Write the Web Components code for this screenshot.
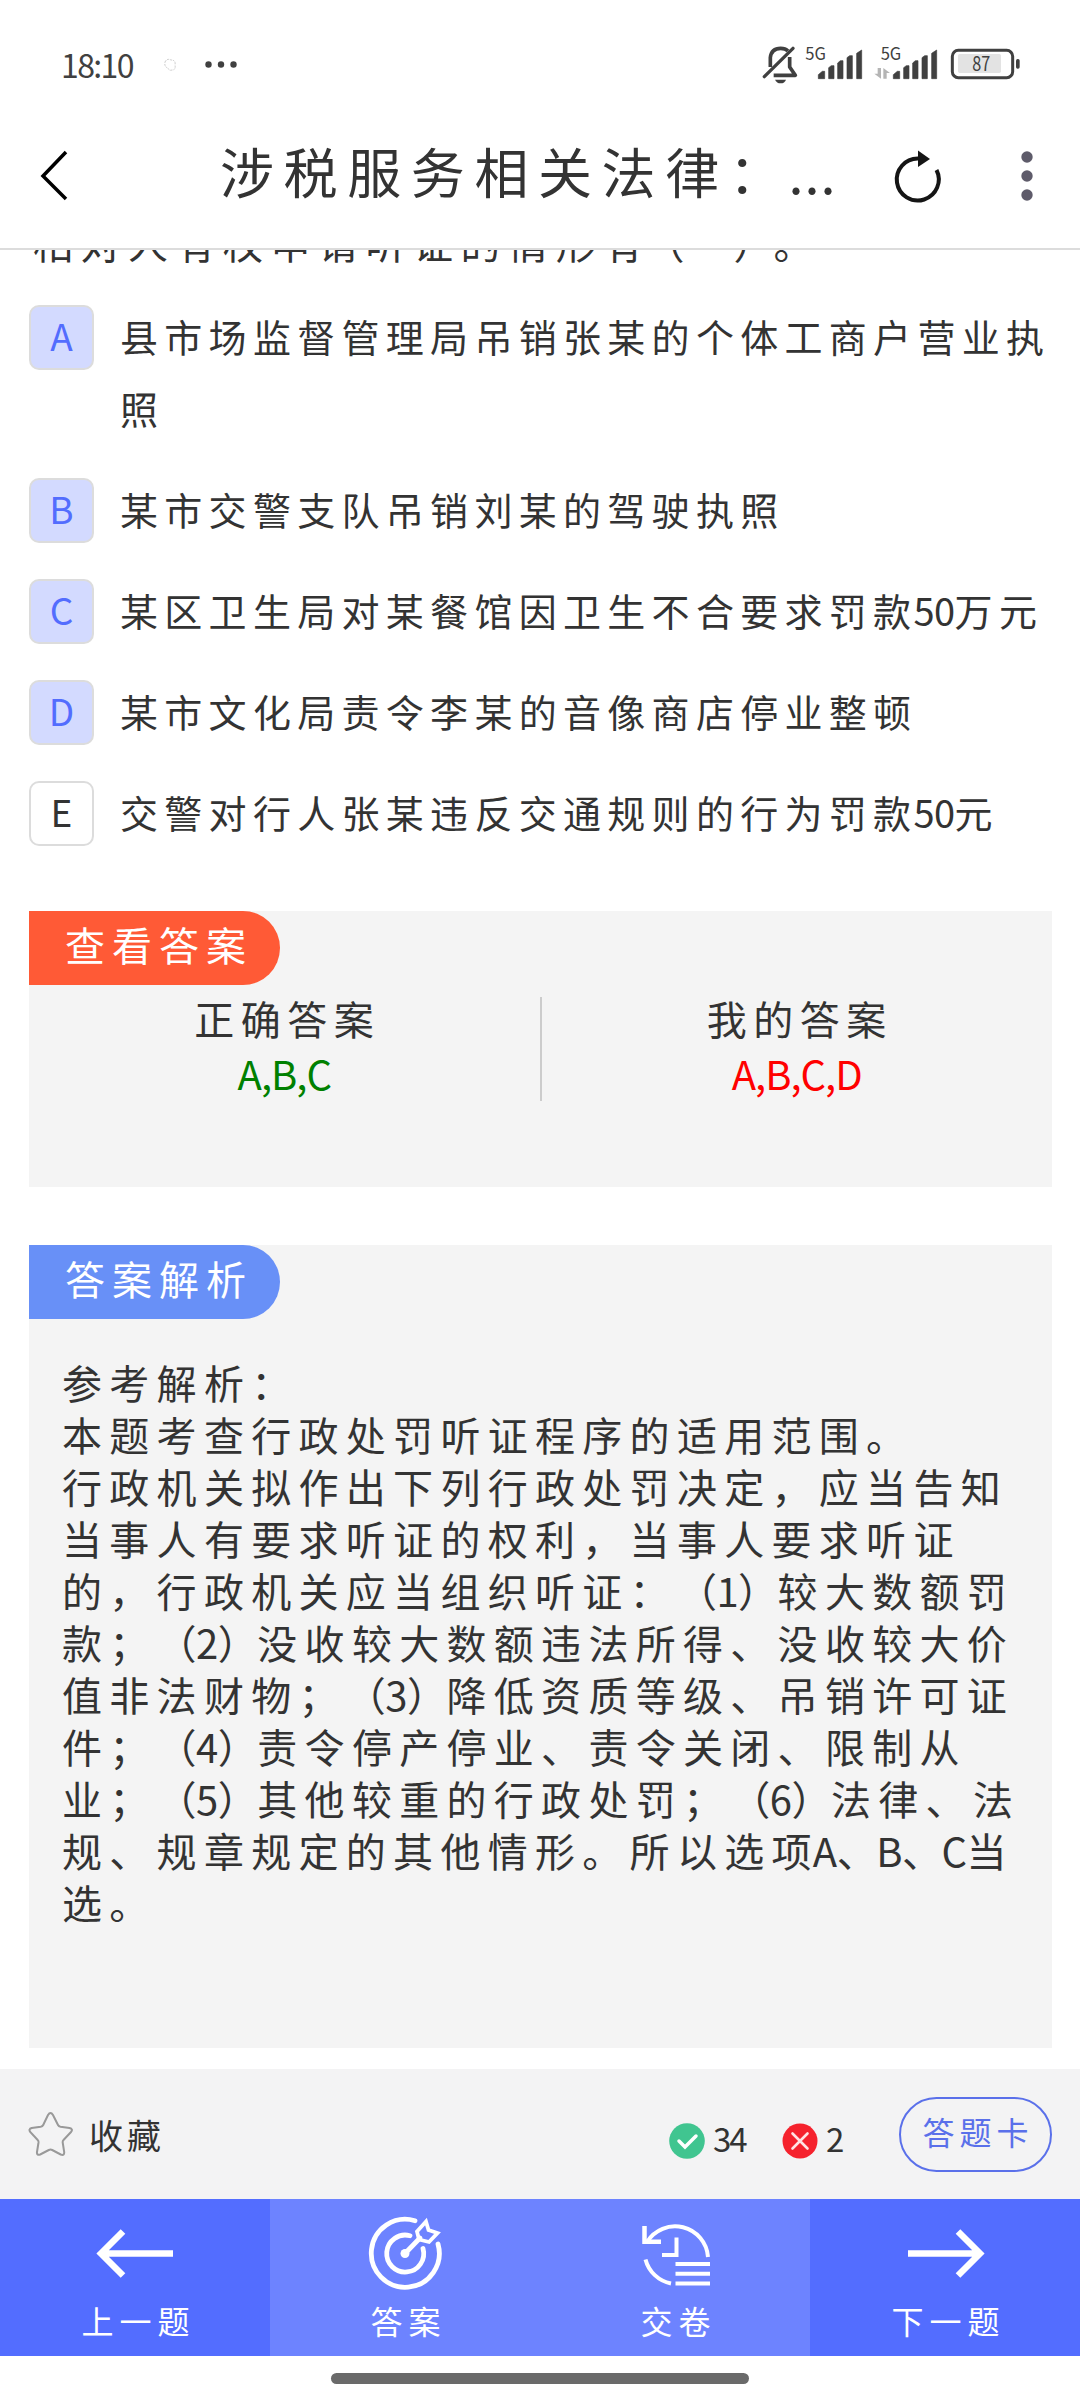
<!DOCTYPE html>
<html lang="zh-CN">
<head>
<meta charset="utf-8">
<title>涉税服务相关法律</title>
<style>
  body {
    margin: 0;
    width: 1080px;
    height: 2400px;
    overflow: hidden;
    display: flex;
    flex-direction: column;
    background: #fff;
    color: #333;
    font-family: "Noto Sans CJK SC", sans-serif;
    text-spacing-trim: space-all;
  }
  main {
    flex: 1;
    min-height: 0;
    overflow: hidden;
    padding: 0 28px 0 29px;
  }
  .tight { letter-spacing: -0.5px; }
</style>
</head>
<body>
  <status-bar></status-bar>
  <title-bar>涉税服务相关法律：<span style="margin-left:-4px;letter-spacing:1px">...</span></title-bar>
  <main>
    <question-tail>相对人有权申请听证的情形有<span style="letter-spacing:0;margin-left:-6px">（&emsp;&nbsp;）</span>。</question-tail>
    <option-list>
      <option-row key="A" checked>县市场监督管理局吊销张某的个体工商户营业执<br>照</option-row>
      <option-row key="B" checked>某市交警支队吊销刘某的驾驶执照</option-row>
      <option-row key="C" checked>某区卫生局对某餐馆因卫生不合要求罚款<span class="tight" style="margin-left:-4px">50</span>万元</option-row>
      <option-row key="D" checked>某市文化局责令李某的音像商店停业整顿</option-row>
      <option-row key="E">交警对行人张某违反交通规则的行为罚款<span class="tight" style="margin-left:-4px">50</span>元</option-row>
    </option-list>
    <info-card label="查看答案" style="--tag:#ff5a36; height:276px; margin-top:60px">
      <answer-pair right="A,B,C" mine="A,B,C,D"></answer-pair>
    </info-card>
    <info-card label="答案解析" style="--tag:#6890f7; height:803px; margin-top:58px">
      <answer-note>参考解析：<br>本题考查行政处罚听证程序的适用范围。<br>行政机关拟作出下列行政处罚决定，应当告知<br>当事人有要求听证的权利，当事人要求听证<br>的，行政机关应当组织听证：<span class="tight">（1）</span>较大数额罚<br>款；<span class="tight">（2）</span>没收较大数额违法所得、没收较大价<br>值非法财物；<span class="tight">（3）</span>降低资质等级、吊销许可证<br>件；<span class="tight">（4）</span>责令停产停业、责令关闭、限制从<br>业；<span class="tight">（5）</span>其他较重的行政处罚；<span class="tight">（6）</span>法律、法<br>规、规章规定的其他情形。所以选项<span class="tight" style="margin-left:-6px">A、B、C</span>当<br>选。</answer-note>
    </info-card>
  </main>
  <tool-bar right="34" wrong="2"></tool-bar>
  <bottom-nav></bottom-nav>
  <home-bar></home-bar>

<script>
class StatusBar extends HTMLElement {
  connectedCallback() {
    this.attachShadow({ mode: 'open' }).innerHTML = `
      <style>
        :host {
          display: flex;
          align-items: center;
          flex: none;
          height: 110px;
          padding: 18px 45px 0 61px;
          box-sizing: border-box;
          color: #404040;
        }
        .time { font-size: 32px; letter-spacing: -1.6px; width: 97px; line-height: 40px; }
        .icons { margin: 2px 0 0 auto; }
        text { font-family: inherit; fill: #404040; }
      </style>
      <span class="time">18:10</span>
      <svg width="90" height="30" viewBox="0 0 90 30">
        <path d="M7 13q2-4 6-2 5 0 4 5 1 5-3 5-3 1-4-2-4-1-3-6z" fill="none" stroke="#ccc" stroke-width="1" stroke-dasharray="2 1"/>
        <g fill="#404040"><circle cx="50.500" cy="15.500" r="3.200"/><circle cx="63" cy="15.500" r="3.200"/><circle cx="75.500" cy="15.500" r="3.200"/></g>
      </svg>
      <svg class="icons" width="280" height="60" viewBox="0 0 840 180">
        <g fill="none" stroke="#404040" stroke-width="11">
          <path d="M46 96V68q3-28 31-28 14 0 22 8" />
          <path d="M104 66v30l17 25H56" stroke-linejoin="round"/>
          <path d="M28 125L114 40" stroke-width="10" stroke-linecap="round"/>
        </g>
        <path d="M60 134h33q-4 11-16 11t-17-11z" fill="#404040"/>
        <text x="151" y="74" font-size="52" textLength="62" lengthAdjust="spacingAndGlyphs">5G</text>
        <path d="M190 131v-12l12-10h7v22zM221 131v-33l8-6h8v39zM248 131v-47l8-7h8v54zM276 131v-63l8-6h8v69zM305 131v-76l15-10v86z" fill="#404040" stroke="#404040" stroke-width="2" stroke-linejoin="round"/>
        <text x="377" y="74" font-size="52" textLength="62" lengthAdjust="spacingAndGlyphs">5G</text>
        <path transform="translate(225)" d="M190 131v-12l12-10h7v22zM221 131v-33l8-6h8v39zM248 131v-47l8-7h8v54zM276 131v-63l8-6h8v69zM305 131v-76l15-10v86z" fill="#404040" stroke="#404040" stroke-width="2" stroke-linejoin="round"/>
        <path d="M368 99h10v32L358 116h10zM385 131V99l20 15h-10v17z" fill="#b5b5b5"/>
        <rect x="592" y="46" width="181" height="82" rx="18" fill="none" stroke="#404040" stroke-width="9"/>
        <rect x="609" y="57" width="129" height="57" rx="5" fill="#e3e3e3"/>
        <rect x="783" y="72" width="11" height="29" rx="5" fill="#404040"/>
        <text x="652" y="108" font-size="60" textLength="54" lengthAdjust="spacingAndGlyphs">87</text>
      </svg>
    `;
  }
}

class TitleBar extends HTMLElement {
  connectedCallback() {
    this.attachShadow({ mode: 'open' }).innerHTML = `
      <style>
        :host {
          display: flex;
          align-items: center;
          flex: none;
          height: 140px;
          box-sizing: border-box;
          border-bottom: 2px solid #dcdcdc;
          padding-left: 36px;
        }
        h1 {
          margin: 0 0 16px 140px;
          width: 673px;
          font-size: 54px;
          font-weight: 400;
          letter-spacing: 9.6px;
          line-height: 80px;
          white-space: nowrap;
        }
        .back { flex: none; margin-bottom: 8px; }
        .reload { flex: none; margin-left: -6px; }
        .more { flex: none; margin: 0 0 4px 68px; }
      </style>
      <svg class="back" width="44" height="60" viewBox="0 0 44 60"><path d="M30 7L7 31l23 23" fill="none" stroke="#000" stroke-width="3.500"/></svg>
      <h1><slot></slot></h1>
      <svg class="reload" width="60" height="60" viewBox="0 0 60 60">
        <path d="M49.500 21A21 21 0 1 1 31 9.500" fill="none" stroke="#151515" stroke-width="4"/>
        <path d="M31 1.500L43 10 31 18z" fill="#151515"/>
      </svg>
      <svg class="more" width="24" height="60" viewBox="0 0 24 60" fill="#5e5b6a"><circle cx="12" cy="10" r="5.700"/><circle cx="12" cy="29" r="5.700"/><circle cx="12" cy="48" r="5.700"/></svg>
    `;
  }
}

// last line of the question, scrolled half under the title bar
class QuestionTail extends HTMLElement {
  connectedCallback() {
    this.attachShadow({ mode: 'open' }).innerHTML = `
      <style>
        :host {
          display: block;
          margin: -44px 0 25px 4px;
          font-size: 40px;
          letter-spacing: 7.5px;
          line-height: 72px;
          white-space: nowrap;
        }
      </style>
      <slot></slot>
    `;
  }
}

class OptionList extends HTMLElement {
  connectedCallback() {
    this.attachShadow({ mode: 'open' }).innerHTML = `
      <style>
        :host { display: flex; flex-direction: column; gap: 29px; }
      </style>
      <slot></slot>
    `;
  }
}

class OptionRow extends HTMLElement {
  connectedCallback() {
    this.attachShadow({ mode: 'open' }).innerHTML = `
      <style>
        :host {
          display: flex;
          align-items: flex-start;
          gap: 26px;
        }
        .key {
          flex: none;
          width: 65px;
          height: 65px;
          box-sizing: border-box;
          margin-top: 2px;
          border: 2px solid #dcdcdc;
          border-radius: 10px;
          font-size: 37px;
          line-height: 57px;
          text-align: center;
        }
        :host([checked]) .key { background: #d3daff; color: #536dfe; }
        .text {
          margin: -3px 0 3px;
          font-size: 38px;
          letter-spacing: 6.3px;
          line-height: 72px;
          white-space: nowrap;
        }
      </style>
      <div class="key">${this.getAttribute('key')}</div>
      <div class="text"><slot></slot></div>
    `;
  }
}

class InfoCard extends HTMLElement {
  connectedCallback() {
    this.attachShadow({ mode: 'open' }).innerHTML = `
      <style>
        :host { display: block; background: #f4f4f4; }
        .tag {
          width: 251px;
          height: 74px;
          box-sizing: border-box;
          padding-left: 36px;
          border-radius: 0 37px 37px 0;
          background: var(--tag);
          color: #fff;
          font-size: 40px;
          letter-spacing: 7px;
          line-height: 67px;
        }
      </style>
      <div class="tag">${this.getAttribute('label')}</div>
      <slot></slot>
    `;
  }
}

class AnswerPair extends HTMLElement {
  connectedCallback() {
    this.attachShadow({ mode: 'open' }).innerHTML = `
      <style>
        :host {
          display: flex;
          margin-top: 12px;
          height: 104px;
          text-align: center;
        }
        div { flex: 1; }
        div + div { border-left: 2px solid #ccc; }
        p { margin: -5px 0 0; padding-left: 6px; font-size: 40px; letter-spacing: 6.5px; line-height: 52px; }
        .value { margin-top: 3px; padding: 0; font-size: 40px; letter-spacing: -1px; }
        .right { color: #008000; }
        .mine { color: #f00; }
      </style>
      <div><p>正确答案</p><p class="value right">${this.getAttribute('right')}</p></div>
      <div><p>我的答案</p><p class="value mine">${this.getAttribute('mine')}</p></div>
    `;
  }
}

class AnswerNote extends HTMLElement {
  connectedCallback() {
    this.attachShadow({ mode: 'open' }).innerHTML = `
      <style>
        :host {
          display: block;
          padding: 37px 0 0 33px;
          font-size: 40px;
          letter-spacing: 7.3px;
          line-height: 52px;
          white-space: nowrap;
        }
      </style>
      <slot></slot>
    `;
  }
}

class ToolBar extends HTMLElement {
  connectedCallback() {
    this.attachShadow({ mode: 'open' }).innerHTML = `
      <style>
        :host {
          display: flex;
          align-items: center;
          flex: none;
          height: 130px;
          box-sizing: border-box;
          padding: 0 28px 0 28px;
          margin-top: 21px;
          background: #f3f3f4;
        }
        .fav { font-size: 34px; letter-spacing: 4px; margin-left: 16px; }
        .count { display: flex; align-items: center; gap: 8px; font-size: 33px; letter-spacing: -2px; line-height: 38px; padding-top: 14px; }
        .count b { font-weight: 400; margin-top: -7px; }
        .ok { margin-left: auto; width: 113px; }
        .bad { width: 117px; }
        button {
          width: 153px;
          height: 75px;
          padding: 0 0 6px 5px;
          margin-left: 0;
          border: 2px solid #5a70ea;
          border-radius: 38px;
          background: none;
          color: #5a70ea;
          font-family: inherit;
          font-size: 32px;
          letter-spacing: 5px;
          white-space: nowrap;
        }
      </style>
      <svg width="45" height="46" viewBox="0 0 45 46">
        <path d="M20 4q2.500-4 5 0l5 10q.7 1.500 2.500 1.800l9 1.200q4 1 1.500 4l-7.500 8q-1 1-.8 2.500l1.500 9.500q.3 4-3.500 2.500l-8.500-4.500q-1.700-.8-3.400 0l-8.600 4.500q-3.700 1-3.200-2.500l1.500-9.500q.2-1.500-.8-2.500l-7.500-8q-2-3 1.500-4l9-1.200q1.800-.3 2.500-1.800z" fill="none" stroke="#999" stroke-width="2"/>
      </svg>
      <span class="fav">收藏</span>
      <span class="count ok">
        <svg width="36" height="36" viewBox="0 0 36 36"><circle cx="18" cy="18" r="17.800" fill="#40c590"/><path d="M10 18l6 6 11-11" fill="none" stroke="#fff" stroke-width="3.500" stroke-linecap="round"/></svg>
        <b>${this.getAttribute('right')}</b>
      </span>
      <span class="count bad">
        <svg width="36" height="36" viewBox="0 0 36 36"><circle cx="18" cy="18" r="17.500" fill="#f5222d"/><path d="M10.500 10.500l15 15m0-15l-15 15" fill="none" stroke="#ffe3e3" stroke-width="2.600" stroke-linecap="round"/></svg>
        <b>${this.getAttribute('wrong')}</b>
      </span>
      <button>答题卡</button>
    `;
  }
}

class BottomNav extends HTMLElement {
  connectedCallback() {
    this.attachShadow({ mode: 'open' }).innerHTML = `
      <style>
        :host {
          display: grid;
          grid-template-columns: repeat(4, 1fr);
          flex: none;
          height: 157px;
          color: #fff;
        }
        a {
          display: flex;
          flex-direction: column;
          align-items: center;
          box-sizing: border-box;
          padding-top: 17px;
          background: #6d83ff;
        }
        a.step { background: #536dff; }
        svg { display: block; fill: none; stroke: #fff; overflow: visible; }
        span { margin: 1px 0 0 7px; font-size: 32px; letter-spacing: 6px; line-height: 46px; }
      </style>
      <a class="step">
        <svg width="90" height="80" viewBox="0 0 90 80"><path d="M83 37.500H14M33 15.500L11 37.500l22 22" stroke-width="6.500"/></svg>
        <span>上一题</span>
      </a>
      <a>
        <svg width="90" height="80" viewBox="0 0 90 80" stroke-width="4.800" stroke-linecap="round">
          <path d="M55 4.700A34 34 0 1 0 78 28"/>
          <path d="M50 19.700A18.500 18.500 0 1 0 63 32.500"/>
          <path d="M45 37.500L60 22"/>
          <circle cx="45" cy="37.500" r="4.500" fill="#fff" stroke="none"/>
          <path d="M57 15.500L66 5.500l2.500 8.500 9 3-8.500 9-10-2.500z" stroke-width="3.800" stroke-linejoin="miter"/>
        </svg>
        <span>答案</span>
      </a>
      <a>
        <svg width="90" height="80" viewBox="0 0 90 80" stroke-width="4">
          <path d="M17 26A33 33 0 0 1 78 41"/>
          <path d="M15.500 43.500A33 33 0 0 0 41 67.500"/>
          <path d="M14.500 10v15.800H31" stroke-width="4.500"/>
          <path d="M46.500 21.500v17.500H32"/>
          <path d="M45.500 48H80M45.500 57.800H80M45.500 67.500H80"/>
        </svg>
        <span>交卷</span>
      </a>
      <a class="step">
        <svg width="90" height="80" viewBox="0 0 90 80"><path d="M8 37.500h69M58 15.500l22 22-22 22" stroke-width="6.500"/></svg>
        <span>下一题</span>
      </a>
    `;
  }
}

class HomeBar extends HTMLElement {
  connectedCallback() {
    this.attachShadow({ mode: 'open' }).innerHTML = `
      <style>
        :host { display: flex; justify-content: center; flex: none; height: 44px; }
        i { width: 418px; height: 11px; margin-top: 17px; border-radius: 6px; background: #6a6a6a; }
      </style>
      <i></i>
    `;
  }
}

customElements.define('status-bar', StatusBar);
customElements.define('title-bar', TitleBar);
customElements.define('question-tail', QuestionTail);
customElements.define('option-list', OptionList);
customElements.define('option-row', OptionRow);
customElements.define('info-card', InfoCard);
customElements.define('answer-pair', AnswerPair);
customElements.define('answer-note', AnswerNote);
customElements.define('tool-bar', ToolBar);
customElements.define('bottom-nav', BottomNav);
customElements.define('home-bar', HomeBar);
</script>
</body>
</html>
